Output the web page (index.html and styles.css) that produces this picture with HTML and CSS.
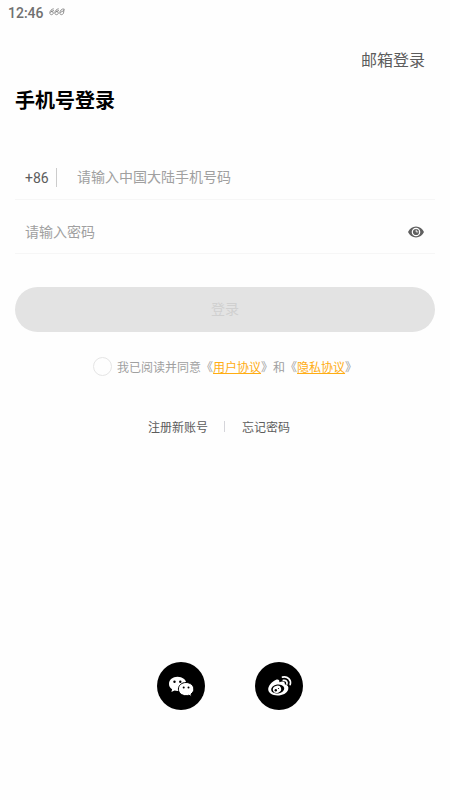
FILE: index.html
```html
<!DOCTYPE html>
<html lang="zh-CN">
<head>
<meta charset="utf-8">
<title>手机号登录</title>
<link rel="stylesheet" href="styles.css">
</head>
<body>
<header class="status">
  <span class="clock">12:46</span>
  <svg class="signal" width="16" height="8" viewBox="0 0 16 8" fill="none" stroke="#777" stroke-width=".8">
    <path d="M4.800 .8C2.500 1 1 2.800 .8 4.800C.7 7.300 4 7.200 4.300 5.200C4.500 3.200 2 3 1.200 4.500M9.800 .8C7.500 1 6 2.800 5.800 4.800C5.700 7.300 9 7.200 9.300 5.200C9.500 3.200 7 3 6.200 4.500M15.200 1C12.500 .5 11 2.800 10.800 4.800C10.700 7.300 14 7.200 14.500 5L15.200 1M11.200 4.500L15 2.500M2 3.500L5 2.500M7 3.500L10 2.500"/>
  </svg>
</header>
<main class="page">
  <a class="switch">邮箱登录</a>
  <h1 class="title">手机号登录</h1>
  <div class="field field-phone">
    <span class="code">+86</span>
    <span class="divider"></span>
    <span class="hint">请输入中国大陆手机号码</span>
  </div>
  <div class="field field-password">
    <span class="hint">请输入密码</span>
    <svg class="eye" width="16" height="12" viewBox="0 0 16 12">
      <path fill="#606060" d="M0 6C1.600 2.600 4.400.5 8 .5S14.400 2.600 16 6C14.400 9.400 11.600 11.500 8 11.500S1.600 9.400 0 6Z"/>
      <circle cx="8" cy="6" r="3.700" fill="none" stroke="#fff" stroke-width="1.200"/>
      <path d="M8.200 3.800V5.900H10.300" fill="none" stroke="#fff" stroke-width=".9"/>
    </svg>
  </div>
  <div class="submit">登录</div>
  <div class="agree">
    <span class="check"></span>
    <span class="terms">我已阅读并同意《<a>用户协议</a>》和《<a>隐私协议</a>》</span>
  </div>
  <div class="links">
    <span>注册新账号</span><span class="bar"></span><span>忘记密码</span>
  </div>
  <div class="social">
    <svg width="48" height="48" viewBox="0 0 48 48">
      <circle cx="24" cy="24" r="24"/>
      <path fill="#fff" d="M20.500 14.800C15.700 14.800 12 17.900 12 21.900C12 24.200 13.200 26 15.100 27.300L14.400 29.900L17.500 28.500C22.500 30 29 27.500 29.300 22C29.500 17.900 25.300 14.800 20.500 14.800Z"/>
      <path fill="#fff" stroke="#000" stroke-width="1" d="M29 20.500C24.700 20.500 21.400 23.400 21.400 27.100S24.700 33.700 29 33.700C30 33.700 31 33.500 31.900 33.200L34.700 34.600L34 32C35.700 30.900 36.800 29.200 36.800 27.100C36.800 23.400 33.300 20.500 29 20.500Z"/>
      <g><circle cx="17.500" cy="19.700" r="1.200"/><circle cx="23.300" cy="19.700" r="1.200"/><circle cx="26.700" cy="25.400" r="1"/><circle cx="31.500" cy="25.400" r="1"/></g>
    </svg>
    <svg width="48" height="48" viewBox="0 0 48 48">
      <circle cx="24" cy="24" r="24"/>
      <path fill="#fff" d="M20.600 18C23 17 24.800 17.700 24.300 20.300C27.500 19 30.300 19.300 29.800 22.300C32.500 23 34 24.800 33.200 27.500C32.200 31.300 27.500 33.500 22.600 33.500C17.300 33.500 13.200 31 13.200 27.300C13.200 24 16.800 19.600 20.600 18Z"/>
      <ellipse cx="22.700" cy="27" rx="6.600" ry="4.500" transform="rotate(-8 22.700 27)"/>
      <ellipse cx="22" cy="27.300" rx="4.200" ry="3.600" fill="#fff" transform="rotate(-20 22 27.300)"/>
      <circle cx="20.800" cy="28.200" r="1.200"/><circle cx="23.500" cy="26.500" r=".6"/>
      <path d="M27.500 15.100C32.500 13.800 36.600 17.900 35.200 22.600M28.300 18.400C30.800 17.900 32.600 19.800 31.900 22" fill="none" stroke="#fff" stroke-width="1.700" stroke-linecap="round"/>
    </svg>
  </div>
</main>
</body>
</html>
```
FILE: styles.css
```css
* { box-sizing: border-box; }
body {
  margin: 0;
  height: 800px;
  background: #fefefe;
  color: #5c5c5c;
  font-family: Roboto, "Noto Sans CJK SC", sans-serif;
  font-size: 14px;
}
.status {
  display: flex;
  align-items: center;
  gap: 5px;
  height: 26px;
  padding-left: 8px;
}
.clock { font-weight: 500; color: #707070; }
.signal { margin-top: -2px; }
.page {
  display: flex;
  flex-direction: column;
  padding: 23px 15px 0;
}
.switch {
  align-self: flex-end;
  margin-right: 10px;
  font-size: 16px;
  line-height: 24px;
}
.title {
  margin: 13px 0 0;
  font-size: 20px;
  line-height: 30px;
  font-weight: 700;
  color: #000;
}
.field {
  display: flex;
  align-items: center;
  padding: 0 11px 0 10px;
  border-bottom: 1px solid #f6f6f6;
}
.field-phone { height: 45px; margin-top: 39px; }
.field-password { height: 54px; padding-top: 10px; }
.code { width: 31px; padding-top: 2px; }
.divider { width: 1px; height: 19px; background: #ccc; margin: 0 20px 0 0; }
.hint { flex: 1; color: #a0a0a0; line-height: 20px; }
.submit {
  height: 45px;
  margin-top: 32.5px;
  border-radius: 23px;
  background: #e3e3e3;
  color: #d0d0d0;
  line-height: 45px;
  text-align: center;
}
.agree {
  display: flex;
  align-items: center;
  gap: 5px;
  height: 20px;
  margin: 25px 0 0 77.5px;
  font-size: 12px;
  color: #a0a0a0;
}
.check {
  width: 19.5px;
  height: 19.5px;
  border: 1px solid #e5e5e5;
  border-radius: 50%;
}
.terms { white-space: nowrap; line-height: 18px; padding-top: 2px; }
.terms a { color: #ffad12; text-decoration: underline; }
.links {
  display: flex;
  align-items: center;
  height: 20px;
  margin: 40px 0 0 133px;
  font-size: 12px;
}
.bar { width: 1px; height: 11px; margin: 0 17px 0 16px; background: #d5d5da; }
.social {
  display: flex;
  gap: 50px;
  margin: 225.5px 0 0 142px;
}
```
